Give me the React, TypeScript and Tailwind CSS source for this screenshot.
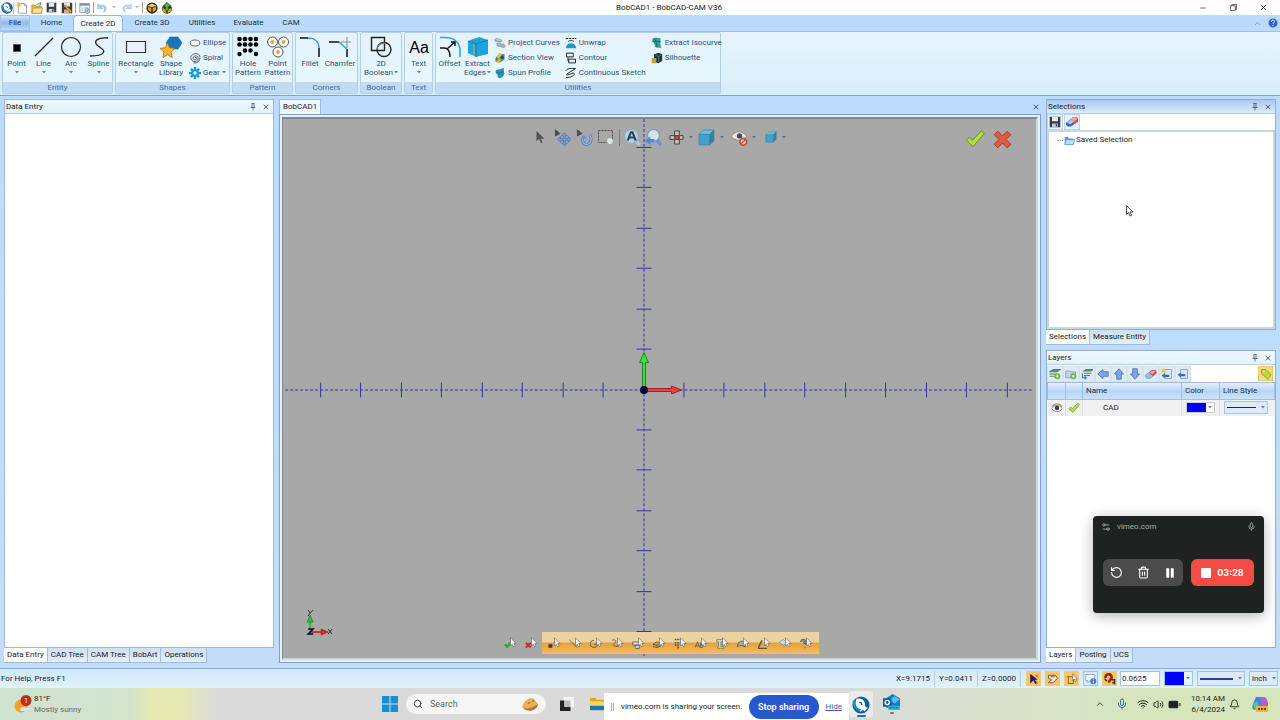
import type { ReactNode } from "react";
import clsx from "clsx";
import {
  Battery,
  Bell,
  ChevronUp,
  Mic,
  Minus,
  Pause,
  RotateCcw,
  Search,
  Settings2,
  Trash2,
  Volume2,
  Wifi,
  X,
} from "lucide-react";

interface IconProps {
  size?: number;
  box?: number;
  children: ReactNode;
}

function Icon({ size = 12, box = 16, children }: IconProps) {
  return (
    <svg
      width={size}
      height={size}
      viewBox={`0 0 ${box} ${box}`}
      fill="none"
      className="shrink-0"
      aria-hidden="true"
    >
      {children}
    </svg>
  );
}

function Caret({ className = "text-[#6b83a3]" }: { className?: string }) {
  return (
    <svg width="4" height="3" viewBox="0 0 4 3" className={clsx("shrink-0", className)} aria-hidden="true">
      <path d="M0 0h4L2 2.5z" fill="currentColor" />
    </svg>
  );
}

function Pin() {
  return (
    <Icon size={8}>
      <path d="M5 1h6M6 1v8M10 1v8M3 9h10M8 9v6" stroke="#23364f" strokeWidth="1.3" />
    </Icon>
  );
}

function BobLogo({ size = 12 }: { size?: number }) {
  return (
    <Icon size={size} box={20}>
      <circle cx="10" cy="10" r="9.5" fill="#11609c" />
      <path d="M5 3c4-1 8 0 9 4 1 3-1 5 3 6-2 3-6 4-9 2C4 13 3 8 5 3z" fill="#fff" />
      <path d="M2 5c0 7 4 11 10 11" stroke="#1b91c9" strokeWidth="2.5" />
      <path d="M8 7c2 0 3 1 3 3" stroke="#11609c" strokeWidth="1.5" />
      <path d="M9 17l4-4 1 3 3-3" stroke="#fff" strokeWidth="1.3" />
    </Icon>
  );
}

function SaveIcon({ size = 12 }: { size?: number }) {
  return (
    <Icon size={size}>
      <path d="M1 1h14v14H1z" fill="#343a40" />
      <path d="M4 1h8v6H4z" fill="#e9edf0" />
      <path d="M4 10h8v5H4z" fill="#c3c9ce" />
      <path d="M9 11h2v3H9z" fill="#343a40" />
    </Icon>
  );
}

function EraserIcon({ size = 12 }: { size?: number }) {
  return (
    <Icon size={size}>
      <path d="M0 9l9-7h5l2 2v3l-9 7H2l-2-2z" fill="#3f67c8" />
      <path d="M6 5l4-3h4l2 2v3l-5 4z" fill="#e04a40" />
      <path d="M1 9l5-4 5 2-5 4z" fill="#a9c3f3" />
      <path d="M6 5l4-3h3l2 2-4 3z" fill="#f4a49c" />
    </Icon>
  );
}

function CheckIcon({ size = 12 }: { size?: number }) {
  return (
    <Icon size={size}>
      <path d="M1 9l2.5-2.5L6 9l7-7.5 2.5 2L6.5 14z" fill="#b4dd3e" stroke="#6d8f22" strokeWidth=".8" />
    </Icon>
  );
}

function CrossIcon({ size = 12 }: { size?: number }) {
  return (
    <Icon size={size}>
      <path d="M1 4l3-3 4 4 4-4 3 3-4 4 4 4-3 3-4-4-4 4-3-3 4-4z" fill="#e1583f" stroke="#a5382b" strokeWidth=".8" />
    </Icon>
  );
}

function CubeIcon({ size = 12 }: { size?: number }) {
  return (
    <Icon size={size}>
      <path d="M1 5l4-4h10l-4 4z" fill="#61c4e6" />
      <path d="M1 5h10v10H1z" fill="#2da4d3" />
      <path d="M11 5l4-4v10l-4 4z" fill="#2380aa" />
      <path d="M1 5l4-4h10v10l-4 4H1zM1 5h10v10M11 5l4-4" stroke="#34728e" strokeWidth=".6" />
    </Icon>
  );
}

/* ---------- title bar ---------- */

const quickAccess: { name: string; icon: ReactNode; split?: boolean; sep?: boolean }[] = [
  {
    name: "New",
    icon: (
      <Icon>
        <path d="M3 2h8l3 3v10H3z" fill="#fff" stroke="#7d8b9c" />
        <path d="M11 2v3h3" stroke="#7d8b9c" />
        <path d="M4 0v8M0 4h8M1 1l6 6M7 1L1 7" stroke="#e9bf3a" strokeWidth="1.2" />
      </Icon>
    ),
  },
  {
    name: "Open",
    icon: (
      <Icon>
        <path d="M1 4h5l1 2h7v9H1z" fill="#e0b84c" stroke="#a78229" strokeWidth=".8" />
        <path d="M3 8h13l-3 7H1z" fill="#f9e29a" stroke="#a78229" strokeWidth=".8" />
        <path d="M8 4c1-3 4-3 5-1M13 0v4h-3" stroke="#4d9b48" strokeWidth="1.3" />
      </Icon>
    ),
  },
  { name: "Save", icon: <SaveIcon size={11} /> },
  {
    name: "Save As",
    sep: true,
    icon: (
      <Icon>
        <path d="M1 1h14v14H1z" fill="#453c36" />
        <path d="M4 1h8v5H4z" fill="#dfe3e6" />
        <path d="M4 10h7v5H4z" fill="#bcb4a4" />
        <path d="M4 5l2-1 8 8v3l-2-1z" fill="#f0a93a" stroke="#8b5616" strokeWidth=".7" />
      </Icon>
    ),
  },
  {
    name: "Properties",
    sep: true,
    icon: (
      <Icon>
        <path d="M1 2h13v12H1z" fill="#f4f7fa" stroke="#8693a3" />
        <path d="M1 2h13v3H1z" fill="#8693a3" />
        <path d="M3 8h2M7 8h5M3 11h2" stroke="#7389a3" />
        <circle cx="11" cy="12" r="3" fill="#cdd8e6" stroke="#69809d" />
        <circle cx="11" cy="12" r="1" fill="#69809d" />
      </Icon>
    ),
  },
  {
    name: "Undo",
    split: true,
    icon: (
      <Icon>
        <path d="M1 2v7h7L5.500 6.500c3-2 6 1 3.500 7.500 6-5 3-12-6-9.500z" fill="#b2cde9" stroke="#86a9cd" strokeWidth=".7" />
      </Icon>
    ),
  },
  {
    name: "Redo",
    split: true,
    sep: true,
    icon: (
      <Icon>
        <path d="M15 2v7H8l2.500-2.500c-3-2-6 1-3.500 7.500-6-5-3-12 6-9.500z" fill="#c5d7ea" stroke="#9cb6d0" strokeWidth=".7" />
      </Icon>
    ),
  },
  {
    name: "Stock",
    icon: (
      <Icon>
        <circle cx="8" cy="8" r="7.5" fill="#2f2a1d" />
        <path d="M2 5l6-3 6 3-6 2z" fill="#f2cf52" />
        <path d="M2 6l5 2v6l-4-3zM14 6L9 8v6l4-3z" fill="#d9a32a" />
      </Icon>
    ),
  },
  {
    name: "Post",
    icon: (
      <Icon>
        <circle cx="8" cy="9" r="6.5" fill="#2f2a1d" />
        <path d="M2 8l5 2v5l-4-2zM14 8l-5 2v5l4-2z" fill="#d9a32a" />
        <path d="M8 0l5 6h-3v5H6V6H3z" fill="#4cae3d" stroke="#20631b" strokeWidth=".7" />
      </Icon>
    ),
  },
];

function TitleBar() {
  return (
    <header className="relative flex h-[15px] shrink-0 items-center justify-between bg-white">
      <div className="flex items-center pl-px">
        <BobLogo size={12} />
        <span className="h-3 w-px bg-[#c9ced4]" />
        {quickAccess.map((item) => (
          <div key={item.name} className="flex items-center">
            <button aria-label={item.name} className="flex w-[15px] justify-center">
              {item.icon}
            </button>
            {item.split && (
              <span className="flex w-2 justify-center">
                <Caret className="text-[#b3bdc9]" />
              </span>
            )}
            {item.sep && <span className="mx-px h-[11px] w-px bg-[#9aa3ad]" />}
          </div>
        ))}
      </div>
      <h1 className="absolute left-1/2 ml-[29px] -translate-x-1/2 whitespace-nowrap">BobCAD1 - BobCAD-CAM V36</h1>
      <div className="flex items-center pr-[2px] text-[#222]">
        <button aria-label="Minimize" className="flex w-[30px] justify-center">
          <Minus size={8} />
        </button>
        <button aria-label="Restore" className="flex w-[30px] justify-center">
          <Icon size={7}>
            <path d="M1 4h11v11H1zM4 4V1h11v11h-3" stroke="#222" strokeWidth="1.6" />
          </Icon>
        </button>
        <button aria-label="Close" className="flex w-[30px] justify-center">
          <X size={9} />
        </button>
      </div>
    </header>
  );
}

/* ---------- ribbon ---------- */

const ribbonTabs = [
  { name: "Home", width: "w-[43px]" },
  { name: "Create 2D", width: "w-[50px]" },
  { name: "Create 3D", width: "w-[58px]" },
  { name: "Utilities", width: "w-[42px]" },
  { name: "Evaluate", width: "w-[51px]" },
  { name: "CAM", width: "w-[34px]" },
];

function RibbonTabs() {
  return (
    <nav className="flex h-4 shrink-0 items-stretch bg-[#badbfc] text-[#1c2b40]">
      <button className="w-[30px] border border-[#a3c3ea] bg-linear-to-b from-[#cfe3fa] via-[#8fb9ee] to-[#bcdafb] text-[#16365f]">
        File
      </button>
      {ribbonTabs.map((tab) => (
        <button
          key={tab.name}
          className={clsx(
            "whitespace-nowrap",
            tab.width,
            tab.name === "Create 2D" && "rounded-t-sm border-x border-t border-[#93b6de] bg-[#f2fafe]",
          )}
        >
          {tab.name}
        </button>
      ))}
      <div className="ml-auto flex items-center gap-[6px] pr-[2px]">
        <button aria-label="Collapse ribbon">
          <ChevronUp size={9} color="#6f8199" />
        </button>
        <button aria-label="Help">
          <Icon size={10}>
            <circle cx="8" cy="8" r="7.5" fill="#2b62c4" stroke="#a9c2ee" />
            <path d="M5.500 6c0-4 5.500-3 5 0-.3 1.500-2.500 1.500-2.500 3.500M8 11v2" stroke="#fff" strokeWidth="1.6" />
          </Icon>
        </button>
      </div>
    </nav>
  );
}

interface BigButtonProps {
  lines: string[];
  width: string;
  menu?: boolean;
  icon: ReactNode;
}

function BigButton({ lines, width, menu, icon }: BigButtonProps) {
  return (
    <button className={clsx("flex shrink-0 flex-col items-center pt-[3px]", width)}>
      <Icon size={22} box={22}>
        {icon}
      </Icon>
      <span className="mt-px whitespace-nowrap leading-[9px]">{lines[0]}</span>
      {lines[1] && (
        <span className="flex items-center gap-px whitespace-nowrap leading-[9px]">
          {lines[1]}
          {menu && <Caret />}
        </span>
      )}
      {menu && !lines[1] && (
        <span className="flex h-[8px] items-center">
          <Caret />
        </span>
      )}
    </button>
  );
}

function SmallButton({ label, menu, icon }: { label: string; menu?: boolean; icon: ReactNode }) {
  return (
    <button className="flex h-[15px] items-center gap-[2px] whitespace-nowrap">
      <Icon size={12}>{icon}</Icon>
      {label}
      {menu && <Caret />}
    </button>
  );
}

function Group({ title, className, children }: { title: string; className?: string; children: ReactNode }) {
  return (
    <section
      className={clsx(
        "flex shrink-0 flex-col rounded-xs border border-[#b3cfe8] bg-linear-to-b from-[#e3f2fb] to-[#e8f9ff] text-[#2f4f80]",
        className,
      )}
    >
      <div className="flex flex-1">{children}</div>
      <h2 className="h-[11px] bg-[#c2dbf4] text-center leading-[11px] text-[#4468ab]">{title}</h2>
    </section>
  );
}

function Ribbon() {
  return (
    <div className="flex h-[65px] shrink-0 gap-[2px] border-y border-[#9bbfe6] border-b-[#7ba4d6] bg-linear-to-b from-[#e8f4fc] to-[#d5eefa] px-[2px] pb-px">
      <Group title="Entity" className="w-[111px]">
        <BigButton lines={["Point"]} width="w-[27px]" menu icon={<path d="M7.500 8.500h7v7h-7z" fill="#000" stroke="#555" />} />
        <BigButton
          lines={["Line"]}
          width="w-[27px]"
          menu
          icon={<path d="M2 20L20 2" stroke="#222" strokeWidth="1.2" />}
        />
        <BigButton
          lines={["Arc"]}
          width="w-[28px]"
          menu
          icon={<circle cx="11" cy="11" r="9.5" stroke="#222" strokeWidth="1.2" />}
        />
        <BigButton
          lines={["Spline"]}
          width="w-[27px]"
          menu
          icon={<path d="M20 2C10 1 5 5 9 9c3 3 9 5 6 8-2 3-8 3-13 3" stroke="#222" strokeWidth="1.3" />}
        />
      </Group>

      <Group title="Shapes" className="w-[115px]">
        <BigButton
          lines={["Rectangle"]}
          width="w-[40px]"
          menu
          icon={<path d="M1.500 5.500h19v11h-19z" fill="#eaf3fa" stroke="#333" strokeWidth="1.2" />}
        />
        <BigButton
          lines={["Shape", "Library"]}
          width="w-[30px]"
          icon={
            <>
              <path d="M10 1h8l4 6-4 6h-8L6 7z" fill="#1a74c0" stroke="#155a98" strokeWidth=".6" />
              <path
                d="M7.500 7l2.200 4.800 5.300.6-4 3.600 1.200 5.500-4.700-2.800L3 21.500 4 16 0 12.400l5.300-.6z"
                fill="#fdb62e"
                stroke="#b36a0a"
                strokeWidth=".8"
              />
            </>
          }
        />
        <div className="flex flex-col pl-[3px] pt-[2px]">
          <SmallButton
            label="Ellipse"
            icon={<ellipse cx="8" cy="8" rx="6.5" ry="4" fill="#fff" stroke="#444" strokeWidth="1.1" />}
          />
          <SmallButton
            label="Spiral"
            icon={
              <path
                d="M8 8c1-2 3 0 2 1.500S6 11 5.500 8.500 8 4.500 10.500 5.500 13 11 9.500 12.500 2.500 11 2.500 7.500 7 1.500 10.500 2s5 5 3.500 8.500-5 4.500-8 4"
                stroke="#444"
                strokeWidth="1.1"
              />
            }
          />
          <SmallButton
            label="Gear"
            menu
            icon={
              <>
                <circle cx="8" cy="8" r="5" fill="#1b9ad6" />
                <path d="M8 0v16M0 8h16M2.500 2.500l11 11M13.500 2.500l-11 11" stroke="#1b9ad6" strokeWidth="3" />
                <circle cx="8" cy="8" r="2.3" fill="#e3f4fc" />
              </>
            }
          />
        </div>
      </Group>

      <Group title="Pattern" className="w-[61px]">
        <BigButton
          lines={["Hole", "Pattern"]}
          width="w-[30px]"
          icon={
            <g fill="#000">
              {[2.5, 8, 13.5, 19].map((x) => (
                <g key={x}>
                  <circle cx={x} cy="3" r="2.3" />
                  <circle cx={x} cy="8.5" r="2.3" />
                </g>
              ))}
              <circle cx="8" cy="14.5" r="2.2" />
              <circle cx="13.5" cy="14.5" r="2.2" />
              <circle cx="2.5" cy="18" r="2.2" />
              <circle cx="19" cy="18" r="2.2" />
            </g>
          }
        />
        <BigButton
          lines={["Point", "Pattern"]}
          width="w-[29px]"
          icon={
            <>
              {[
                [5.5, 6],
                [16.5, 6],
                [11, 16],
              ].map(([x, y]) => (
                <g key={`${x}-${y}`}>
                  <circle cx={x} cy={y} r="5" fill="#fff" stroke="#555" />
                  <circle cx={x} cy={y} r="2" fill="#eba43b" />
                </g>
              ))}
            </>
          }
        />
      </Group>

      <Group title="Corners" className="w-[63px]">
        <BigButton
          lines={["Fillet"]}
          width="w-[28px]"
          icon={
            <>
              <path d="M1 2h8M20 12v9" stroke="#111" strokeWidth="1.5" />
              <path d="M9 2c7 0 11 4 11 10" stroke="#27a5dc" strokeWidth="1.5" />
            </>
          }
        />
        <BigButton
          lines={["Chamfer"]}
          width="w-[32px]"
          icon={
            <>
              <path d="M0 6h10M18 13v8" stroke="#111" strokeWidth="1.5" />
              <path d="M10 6l8 7" stroke="#27a5dc" strokeWidth="1.5" />
              <path d="M12 6h10M18 1v11" stroke="#777" strokeWidth=".8" />
            </>
          }
        />
      </Group>

      <Group title="Boolean" className="w-[42px]">
        <BigButton
          lines={["2D", "Boolean"]}
          width="w-[40px]"
          menu
          icon={
            <g stroke="#222" strokeWidth="1.4">
              <path d="M1.500 1.500h13v13h-13z" />
              <circle cx="14" cy="13.5" r="7" />
              <path d="M7 14c0-4 3-7 8-7" stroke="#777" />
            </g>
          }
        />
      </Group>

      <Group title="Text" className="w-[29px]">
        <BigButton
          lines={["Text"]}
          width="w-[27px]"
          menu
          icon={
            <text x="11" y="17" textAnchor="middle" fontSize="16" fontFamily="Liberation Sans, sans-serif" fill="#000">
              Aa
            </text>
          }
        />
      </Group>

      <Group title="Utilities" className="w-[286px]">
        <BigButton
          lines={["Offset"]}
          width="w-[27px]"
          icon={
            <>
              <path d="M1 1.500h5c9 0 15 5 15 13V21" stroke="#27a5dc" strokeWidth="1.5" />
              <path d="M1 12h4c4 0 6 3 6 9M8 13l8-7M12 6h4v4" stroke="#111" strokeWidth="1.4" />
            </>
          }
        />
        <BigButton
          lines={["Extract", "Edges"]}
          width="w-[29px]"
          menu
          icon={
            <>
              <path d="M1 5l11-4 9 3v14l-12 3-8-4z" fill="#1ba4de" />
              <path d="M1 5l8 3 12-4M9 8v13" stroke="#116f9e" strokeWidth=".8" />
              <path d="M7 8v12" stroke="#e5b53c" />
            </>
          }
        />
        <div className="flex flex-col pl-[2px] pt-[2px]">
          <SmallButton
            label="Project Curves"
            icon={
              <>
                <path d="M1 3c3-3 6 1 8 0l2 3c-3 2-6-2-9 0z" fill="#b9cbd4" stroke="#7b939f" strokeWidth=".8" />
                <path d="M3 9c4-3 6 2 10 0l2 4c-4 3-6-2-9 0z" fill="#9fb9c2" stroke="#6e8794" strokeWidth=".8" />
                <path d="M1 5c3 0 4 2 8 1" stroke="#57a38f" strokeWidth="1.3" />
              </>
            }
          />
          <SmallButton
            label="Section View"
            icon={
              <>
                <path d="M2 8l5-6 7 1v7l-6 4-6-1z" fill="#1d8bb8" />
                <path d="M3 6l5-5 3 2-5 6z" fill="#f1c231" />
                <path d="M2 13l5-5 3 2-3 5z" fill="#e8a923" />
                <circle cx="11" cy="7" r="2" fill="#244b58" />
              </>
            }
          />
          <SmallButton
            label="Spun Profile"
            icon={
              <>
                <path d="M2 6c0-2 3-3 6-3l5-2v5c2 4-1 8-5 9-3 0-4-3-3-5-2 0-3-2-3-4z" fill="#2892bb" />
                <path d="M4 7c3 2 6 1 9-2" stroke="#146280" />
              </>
            }
          />
        </div>
        <div className="flex flex-col pl-[5px] pt-[2px]">
          <SmallButton
            label="Unwrap"
            icon={
              <>
                <path d="M1 15c1-9 13-9 14 0z" fill="#1d9acb" />
                <path d="M1 2h14" stroke="#222" strokeWidth="1.5" strokeDasharray="3 1" />
                <path d="M4 6c2-2 6-2 8 0" stroke="#222" />
              </>
            }
          />
          <SmallButton
            label="Contour"
            icon={<path d="M2 1.500h9v5H2zM5 9.500h9v5H5zM4 7v5M4 12h1" stroke="#222" strokeWidth="1.3" />}
          />
          <SmallButton
            label="Continuous Sketch"
            icon={<path d="M1 5c3-4 8-3 13-3L3 9c-4 4 5 0 8-1 4 1 0 5-7 6H1" stroke="#222" strokeWidth="1.3" />}
          />
        </div>
        <div className="flex flex-col pl-[5px] pt-[2px]">
          <SmallButton
            label="Extract Isocurve"
            icon={
              <>
                <path d="M2 2c4-2 7 0 10-1 2 4-1 7 2 13-4 1-7-1-9 0 2-5-4-6-3-12z" fill="#2c9ea7" />
                <path d="M5 2c1 4 3 7 3 12M1 6c4-1 8 1 12 0" stroke="#1e5f3c" />
              </>
            }
          />
          <SmallButton
            label="Silhouette"
            icon={
              <>
                <path d="M4 3l6-2 5 2v9l-5 3-6-2z" fill="#1c3f3c" />
                <path d="M1 8h6v7H1z" fill="#c59b36" />
                <path d="M6 4l4 2 4-2M10 6v7" stroke="#3d8e8a" />
              </>
            }
          />
        </div>
      </Group>
    </div>
  );
}

/* ---------- docked panels ---------- */

function PanelHeader({ title, active }: { title: string; active?: boolean }) {
  return (
    <div
      className={clsx(
        "flex h-[14px] shrink-0 items-center border-b border-[#b5cfea] px-px",
        active ? "bg-linear-to-b from-[#a9c8ef] to-[#dcebfa]" : "bg-linear-to-b from-[#eef7fd] to-[#e3f3fb]",
      )}
    >
      <h2>{title}</h2>
      <div className="ml-auto flex items-center gap-[5px] pr-[2px]">
        <button aria-label={`Pin ${title}`}>
          <Pin />
        </button>
        <button aria-label={`Close ${title}`}>
          <X size={8} />
        </button>
      </div>
    </div>
  );
}

function PanelTabs({ tabs }: { tabs: string[] }) {
  return (
    <div className="flex h-[15px] shrink-0" role="tablist">
      {tabs.map((tab, index) => (
        <button
          key={tab}
          role="tab"
          aria-selected={index === 0}
          className={clsx(
            "whitespace-nowrap border-r border-b border-[#9dbbe0] px-[3px]",
            index === 0 ? "bg-white" : "bg-linear-to-b from-[#cde0f4] to-[#e2effb]",
          )}
        >
          {tab}
        </button>
      ))}
    </div>
  );
}

function DataEntryPanel() {
  return (
    <aside className="flex w-[270px] shrink-0 flex-col">
      <div className="flex flex-1 flex-col border border-[#9dbbe0] bg-white">
        <PanelHeader title="Data Entry" />
      </div>
      <PanelTabs tabs={["Data Entry", "CAD Tree", "CAM Tree", "BobArt", "Operations"]} />
    </aside>
  );
}

const layerTools: { name: string; icon: ReactNode }[] = [
  {
    name: "Add layer",
    icon: (
      <>
        <path d="M1 5l5-3h9l-5 3zM1 8h9M1 11h7" fill="#4d83bb" stroke="#55845a" strokeWidth="1.5" />
        <circle cx="11" cy="11" r="4" fill="#6cb637" />
        <path d="M11 9v4M9 11h4" stroke="#fff" strokeWidth="1.3" />
      </>
    ),
  },
  {
    name: "Add folder",
    icon: (
      <>
        <path d="M1 4h5l1 1h7v8H1z" fill="#c4d6e8" stroke="#7d9ab8" />
        <circle cx="11" cy="11" r="4" fill="#6cb637" />
        <path d="M11 9v4M9 11h4" stroke="#fff" strokeWidth="1.3" />
      </>
    ),
  },
  {
    name: "Move to layer",
    icon: (
      <>
        <path d="M4 4l3-2h9l-3 2zM4 7h10M4 10h8" fill="#4d83bb" stroke="#55845a" strokeWidth="1.5" />
        <path d="M2 7v6h5M5 11l2 2-2 2" stroke="#3d72bd" strokeWidth="1.5" />
      </>
    ),
  },
  { name: "Move left", icon: <path d="M1 8l7-6v3h7v6H8v3z" fill="#7fa5e6" stroke="#4268a8" /> },
  { name: "Move up", icon: <path d="M8 1l6 7h-3v7H5V8H2z" fill="#7fa5e6" stroke="#4268a8" /> },
  { name: "Move down", icon: <path d="M8 15l6-7h-3V1H5v7H2z" fill="#7fa5e6" stroke="#4268a8" /> },
  {
    name: "Delete",
    icon: (
      <>
        <path d="M0 10l9-7h5l1 2v2l-8 7H2z" fill="#9db6e8" stroke="#6a7fb0" strokeWidth=".6" />
        <path d="M5 6l4-3h5l1 2v2l-4 4z" fill="#e04a40" />
        <path d="M6 6l3-2h4l1 1-4 3z" fill="#f4a49c" />
      </>
    ),
  },
  {
    name: "Import new",
    icon: (
      <>
        <path d="M5 2h9v12H5z" fill="#dbe6f2" stroke="#7b91ad" />
        <path d="M1 1h5v5H1z" fill="#f4c640" />
        <path d="M1 10l4-3v2h6v3H5v2z" fill="#356bc0" />
      </>
    ),
  },
  {
    name: "Import",
    icon: (
      <>
        <path d="M5 2h9v12H5z" fill="#dbe6f2" stroke="#7b91ad" />
        <path d="M1 9l4-3v2h6v3H5v2z" fill="#356bc0" />
      </>
    ),
  },
];

function RightPanels() {
  return (
    <aside className="flex w-[230px] shrink-0 flex-col gap-[5px]">
      <div className="flex flex-[246] basis-0 flex-col">
        <div className="flex flex-1 flex-col border border-[#8fb0d8] bg-white">
          <PanelHeader title="Selections" active />
          <div className="flex h-4 shrink-0 items-center">
            <button aria-label="Save selection" className="border border-[#b9d6ea] bg-[#e4f1f8] p-px">
              <SaveIcon size={12} />
            </button>
            <button aria-label="Clear selection" className="ml-px border border-[#b9d6ea] bg-[#e4f1f8] p-px">
              <EraserIcon size={12} />
            </button>
          </div>
          <div className="relative flex-1 border-2 border-[#ccd5da] pl-2 pt-[2px]">
            <ul>
              <li className="flex items-center gap-px">
                <span className="w-[6px] border-t border-dotted border-[#aaa]" />
                <Icon size={11}>
                  <path d="M1 3h5l1 2h7v9H1z" fill="#5c9bd8" />
                  <path d="M3 7h13l-3 7H1z" fill="#bfe0fa" stroke="#3f7fba" strokeWidth=".8" />
                </Icon>
                Saved Selection
              </li>
            </ul>
            <svg width="8" height="12" viewBox="0 0 8 12" className="absolute left-[77px] top-[73px]" aria-hidden="true">
              <path d="M.5.5v9l2-2L4 11l1.500-.7L4 7h3z" fill="#fff" stroke="#222" strokeWidth=".8" />
            </svg>
          </div>
        </div>
        <PanelTabs tabs={["Selections", "Measure Entity"]} />
      </div>

      <div className="flex flex-[313] basis-0 flex-col">
        <div className="flex flex-1 flex-col border border-[#8fb0d8] bg-white">
          <PanelHeader title="Layers" />
          <div className="flex h-[17px] shrink-0 items-center">
            {layerTools.map((tool) => (
              <button
                key={tool.name}
                aria-label={tool.name}
                className="flex size-4 items-center justify-center border border-[#d3e3ec] bg-[#dcebf4]"
              >
                <Icon size={12}>{tool.icon}</Icon>
              </button>
            ))}
            <button
              aria-label="Tag"
              className="ml-auto mr-[2px] flex size-[15px] items-center justify-center border border-[#eec65e] bg-[#fbd98a]"
            >
              <Icon size={12}>
                <path d="M2 2h6l7 7-5 6-8-8z" fill="#b9d93b" stroke="#73942a" />
                <circle cx="5" cy="5" r="1" fill="#fff" />
              </Icon>
            </button>
          </div>
          <table className="w-full table-fixed border-collapse text-left">
            <thead>
              <tr className="h-[17px] bg-linear-to-b from-[#e3effb] via-[#b7d5f5] to-[#cfe4fa] text-[#1c2b40]">
                <th aria-label="Visible" className="w-[18px] border border-[#9fc0e4]" />
                <th aria-label="Active" className="w-[17px] border border-[#9fc0e4]" />
                <th className="border border-[#9fc0e4] pl-[3px] font-normal">Name</th>
                <th className="w-[38px] border border-[#9fc0e4] pl-[3px] font-normal">Color</th>
                <th className="w-[55px] border border-[#9fc0e4] pl-[3px] font-normal">Line Style</th>
              </tr>
            </thead>
            <tbody>
              <tr className="h-4 bg-[#f0f0f0]">
                <td className="border-r border-[#dcdcdc] pl-[3px]">
                  <Icon size={12}>
                    <path d="M1 9c3-6 11-6 14 0-4 5-10 5-14 0z" fill="#fff" stroke="#7c5a48" />
                    <circle cx="8" cy="8" r="3" fill="#354152" />
                    <path d="M1 6c4-5 10-5 14 0" stroke="#a9806a" strokeWidth="1.5" />
                  </Icon>
                </td>
                <td className="border-r border-[#dcdcdc] pl-[2px]">
                  <CheckIcon size={12} />
                </td>
                <td className="border-r border-[#dcdcdc] pl-5">CAD</td>
                <td className="border-r border-[#dcdcdc] pl-1">
                  <button
                    aria-label="Layer color"
                    className="flex h-[11px] w-[29px] items-center justify-between border border-[#c2cfdd] bg-white pr-[2px]"
                  >
                    <span className="h-[9px] w-[19px] bg-[#0000fa]" />
                    <Caret />
                  </button>
                </td>
                <td className="pl-1">
                  <button
                    aria-label="Layer line style"
                    className="flex h-[13px] w-[44px] items-center justify-between border border-[#a9c6e6] bg-[#dceafa] px-[2px]"
                  >
                    <span className="h-px w-[29px] bg-[#0a1e9e]" />
                    <Caret />
                  </button>
                </td>
              </tr>
            </tbody>
          </table>
        </div>
        <PanelTabs tabs={["Layers", "Posting", "UCS"]} />
      </div>
    </aside>
  );
}

/* ---------- drawing area ---------- */

const TICK = 40.45;
const ORIGIN = { x: 362, y: 271 };

function Axes() {
  const across = Array.from({ length: 18 }, (_, i) => i - 8).filter((n) => n !== 0);
  const down = Array.from({ length: 13 }, (_, i) => i - 6).filter((n) => n !== 0);

  return (
    <svg
      className="absolute inset-0 size-full"
      viewBox="0 0 756 540"
      preserveAspectRatio="xMidYMid slice"
      fill="none"
      aria-hidden="true"
    >
      <g stroke="#3434a4">
        <path d={`M3 ${ORIGIN.y + 0.5}H753M${ORIGIN.x + 0.5} 0V540`} strokeDasharray="3 2" />
        {across.map((n) => (
          <path key={n} d={`M${Math.floor(ORIGIN.x + n * TICK) + 0.5} ${ORIGIN.y - 7}v15`} />
        ))}
        {down.map((n) => (
          <path key={n} d={`M${ORIGIN.x - 7} ${Math.floor(ORIGIN.y + n * TICK) + 0.5}h15`} />
        ))}
      </g>
      <path d="M361 272v-28h-3l4.500-10 4.500 10h-3v28z" fill="#3ee03e" stroke="#167a16" strokeWidth=".9" />
      <path d="M362 270h28v-2.500l10 4-10 4V273h-28z" fill="#e8463c" stroke="#941c16" strokeWidth=".9" />
      <circle cx="362.5" cy="271.5" r="4" fill="#06063c" />

      <path d="M28 513v-12" stroke="#2fbf2f" strokeWidth="2" />
      <path d="M25 504l3-7 3 7z" fill="#2fbf2f" stroke="#167a16" strokeWidth=".6" />
      <path d="M26 492l2 3 3-3M28 495l-2 3" stroke="#222" strokeWidth=".9" />
      <path d="M29 514h12" stroke="#d92c22" strokeWidth="2" />
      <path d="M39 511l7 3-7 3z" fill="#d92c22" stroke="#941c16" strokeWidth=".6" />
      <path d="M46 511l4 5M50 511l-4 5" stroke="#222" strokeWidth=".9" />
      <path d="M26 511h5l-5 5h5" stroke="#06063c" strokeWidth="1.5" />
    </svg>
  );
}

function ViewToolbar() {
  return (
    <div className="relative mx-auto flex h-5 items-center pr-1 opacity-90">
      <button aria-label="Select" className="flex w-[22px] justify-center">
        <Icon size={14}>
          <path d="M4 1v12l3-3 2 5 2-1-2-4h4z" fill="#4a4a4a" />
        </Icon>
      </button>
      <button aria-label="Pan" className="flex w-[22px] justify-center">
        <Icon size={17} box={18}>
          <path d="M1 0v8l6-3z" fill="#444" />
          <path
            d="M11 4l3 3h-2v3h3V8l3 3-3 3v-2h-3v3h2l-3 3-3-3h2v-3H7v2l-3-3 3-3v2h3V7H8z"
            fill="#6aa0e4"
            stroke="#2e5ca4"
            strokeWidth=".6"
          />
        </Icon>
      </button>
      <button aria-label="Rotate" className="flex w-[22px] justify-center">
        <Icon size={17} box={18}>
          <path d="M1 0v8l6-3z" fill="#444" />
          <path d="M7 10c-1 9 10 8 9 0 0-2-1-3-2-4" stroke="#4578c4" strokeWidth="3" />
          <path d="M7 10c-1 9 10 8 9 0 0-2-1-3-2-4" stroke="#8fbaf0" strokeWidth="1.5" />
          <path d="M5 11l2-5 5 3z" fill="#5f93dd" />
        </Icon>
      </button>
      <button aria-label="Window select" className="flex w-[22px] justify-center">
        <Icon size={16}>
          <path d="M.5 1.500h14v12H.5z" stroke="#444" strokeDasharray="2 1" />
          <circle cx="12" cy="12" r="3" fill="#dceaf0" />
        </Icon>
      </button>
      <span className="mx-[2px] h-[17px] w-px bg-[#777]" />
      <button aria-label="Zoom all" className="flex w-[21px] justify-center">
        <Icon size={17}>
          <path d="M10 10l5 5" stroke="#a9cbe4" strokeWidth="3" />
          <circle cx="7" cy="7" r="6.5" fill="#bcd9e6" stroke="#91b1bf" />
          <path d="M3.500 11L6.500 3h1.500l3 8M5 8h5" stroke="#123e66" strokeWidth="2" />
        </Icon>
      </button>
      <button aria-label="Zoom previous" className="flex w-[21px] justify-center">
        <Icon size={17}>
          <path d="M11 10l4 5" stroke="#5c95d4" strokeWidth="3" />
          <circle cx="8" cy="6" r="5.5" fill="#d8ecf4" stroke="#7896a8" />
          <path d="M0 11l5-4v2.500h4v3H5V15z" fill="#4b84d8" />
        </Icon>
      </button>
      <button aria-label="View orientation" className="flex w-[29px] items-center justify-between pl-[5px]">
        <Icon size={15}>
          <path d="M6 1h5v5h4v4h-4v5H6v-5H1V6h5z" fill="#c3c3c3" stroke="#333" />
          <path d="M6 6h5v4H6z" fill="#d43a32" stroke="#333" />
        </Icon>
        <Caret className="text-[#4b6a8a]" />
      </button>
      <button aria-label="Shading" className="flex w-[31px] items-center justify-between pl-[5px]">
        <CubeIcon size={17} />
        <Caret className="text-[#4b6a8a]" />
      </button>
      <button aria-label="Hide" className="flex w-[32px] items-center justify-between pl-[7px]">
        <Icon size={17}>
          <path d="M0 7c4-6 11-6 15 0-4 5-11 5-15 0z" fill="#eee" stroke="#b38b62" />
          <circle cx="8" cy="6.5" r="2.5" fill="#374556" />
          <circle cx="11.500" cy="12" r="3.2" fill="#f2c9c1" stroke="#ce3e2f" strokeWidth="1.5" />
          <path d="M9.500 14l4-4" stroke="#ce3e2f" strokeWidth="1.3" />
        </Icon>
        <Caret className="text-[#4b6a8a]" />
      </button>
      <button aria-label="Display" className="flex w-[30px] items-center justify-between pl-[9px]">
        <CubeIcon size={12} />
        <Caret className="text-[#4b6a8a]" />
      </button>
    </div>
  );
}

const snaps: { name: string; shape: ReactNode }[] = [
  { name: "Point", shape: <path d="M1 9h4v4H1z" fill="#333" /> },
  { name: "Line", shape: <path d="M0 3l10 10" /> },
  { name: "Arc", shape: <path d="M5 4a4.500 4.500 0 1 0 4 6M5 9h5" /> },
  { name: "Spline", shape: <path d="M1 4c6-2 6 2 3 4s1 5 6 3" /> },
  { name: "Chain", shape: <path d="M1 6h8v4H1zM4 10h5v4H4z" fill="#ddd" /> },
  { name: "Solid", shape: <path d="M0 9l4-3 6 1v4l-5 2-5-1zM0 9l5 1 5-3M5 10v3" fill="#c99f49" /> },
  { name: "Pattern", shape: <path d="M1 3h9M1 7h7M1 10h6M4 13h3" strokeWidth="2" strokeDasharray="2 1" /> },
  { name: "Text", shape: <path d="M0 13l3-7 3 7M1 11h4M7 7v6h2c2-2 1-3-2-3 3 0 2-3 0-3" /> },
  { name: "Edge", shape: <path d="M1 3h8v3H6v6h4v2H2v-2h1V6H1z" fill="#ccd8c4" stroke="#777" /> },
  { name: "Surface", shape: <path d="M0 12c2-8 6-8 10-5v5c-4-2-6-2-10 0z" fill="#9eb4a0" /> },
  { name: "Angle", shape: <path d="M0 14L5 4M0 14h11" strokeWidth="1.8" /> },
  { name: "Face", shape: <path d="M0 7l5-4 5 4-4 3zM6 11v3" fill="#c7dfdf" stroke="#7e8f8f" /> },
  { name: "Curve", shape: <path d="M0 6c3-6 7-2 10 0M4 7l3-2v4zM6 12v2" fill="#7e9a9a" /> },
];

function SnapCursor({ children }: { children: ReactNode }) {
  return (
    <Icon size={13}>
      <g stroke="#555">{children}</g>
      <path d="M8 1v10l2-2 2 3 1.500-1L12 8h3z" fill="#f4f4f4" stroke="#666" strokeWidth=".8" />
    </Icon>
  );
}

function SnapToolbar() {
  return (
    <div className="relative mx-auto mb-1 mt-auto flex h-[22px] items-center">
      <button aria-label="Accept selection" className="flex w-[21px] justify-center">
        <SnapCursor>
          <path d="M1 9l3 3 5-6" stroke="#37a52c" strokeWidth="3" />
        </SnapCursor>
      </button>
      <button aria-label="Clear picks" className="flex w-[21px] justify-center">
        <SnapCursor>
          <path d="M1 7l6 6M7 7l-6 6" stroke="#cb2c26" strokeWidth="2.5" />
        </SnapCursor>
      </button>
      <div className="flex h-[22px] items-center bg-linear-to-b from-[#ecd2a0] from-45% via-[#e8a03a] via-50% to-[#f0c060] px-[2px]">
        {snaps.map((snap) => (
          <button key={snap.name} aria-label={`Pick ${snap.name}`} className="flex w-[21px] justify-center">
            <SnapCursor>{snap.shape}</SnapCursor>
          </button>
        ))}
      </div>
    </div>
  );
}

function Viewport() {
  return (
    <main className="flex min-w-0 flex-1 flex-col">
      <div className="flex h-[15px] shrink-0 items-center justify-between">
        <button className="h-full border-x border-t border-[#9dbbe0] bg-[#eef8fe] px-[3px]">BobCAD1</button>
        <button aria-label="Close document" className="pr-px">
          <X size={8} />
        </button>
      </div>
      <div className="flex flex-1 border border-[#7f9fc9] bg-[#e3f3fb] p-[2px]">
        <div className="relative flex flex-1 flex-col overflow-hidden border-t-2 border-l border-r-2 border-b-2 border-[#7c8a90] border-r-[#cdd6d6] border-b-[#cdd6d6] bg-[#a8a8a8] pt-2">
          <Axes />
          <ViewToolbar />
          <div className="absolute right-6 top-[10px] flex gap-2">
            <button aria-label="OK">
              <CheckIcon size={20} />
            </button>
            <button aria-label="Cancel">
              <CrossIcon size={19} />
            </button>
          </div>
          <SnapToolbar />
        </div>
      </div>
    </main>
  );
}

/* ---------- status bar ---------- */

const statusTools: { name: string; on: boolean; icon: ReactNode }[] = [
  {
    name: "Snap",
    on: true,
    icon: (
      <>
        <path d="M3 1v13l4-4 3 5 2-2-3-4h4z" fill="#25166e" />
        <path d="M10 2l4 4M14 2l-4 4M12 11v4" stroke="#a9604a" />
      </>
    ),
  },
  {
    name: "Planar",
    on: true,
    icon: <path d="M2 3h9l3 4-6 6H2l4-4-4-2zM5 5h5" fill="#f4e4c4" stroke="#66513a" strokeWidth="1.2" />,
  },
  {
    name: "Ortho",
    on: true,
    icon: (
      <>
        <path d="M1 5h9v9M3 5v9h7" stroke="#8a6630" strokeWidth="1.3" />
        <path d="M9 1v9l2-2 2 4 1-1-1-3h2z" fill="#fff" stroke="#555" strokeWidth=".8" />
      </>
    ),
  },
  {
    name: "Info",
    on: false,
    icon: (
      <>
        <path d="M1 2h12v8H7l-3 3v-3H1z" fill="#f4f8fc" stroke="#7e98b8" />
        <circle cx="11" cy="11" r="4" fill="#3f78c8" />
        <path d="M11 8.500v1M11 10.500v3" stroke="#fff" strokeWidth="1.3" />
      </>
    ),
  },
  {
    name: "Magnet",
    on: true,
    icon: (
      <>
        <path d="M2 7C1 0 11 0 10 6c0 3-4 3-3 7" stroke="#a3221c" strokeWidth="3.5" />
        <path d="M10 9h4v6M11 13h4M1 8l3 3" stroke="#333" strokeWidth="2" />
      </>
    ),
  },
];

function StatusBar() {
  return (
    <footer className="flex h-5 shrink-0 items-center border-t border-[#85aee0] bg-linear-to-b from-[#cfe8fa] to-[#e0f3fa] pr-[2px]">
      <p className="flex-1 pl-px">For Help, Press F1</p>
      {["X=9.1715", "Y=0.0411", "Z=0.0000"].map((value) => (
        <span key={value} className="flex h-4 w-[43px] items-center justify-center border-r border-[#b7cedd]">
          {value}
        </span>
      ))}
      <div className="ml-[5px] flex gap-1">
        {statusTools.map((tool) => (
          <button
            key={tool.name}
            aria-label={tool.name}
            className={clsx(
              "flex size-[15px] items-center justify-center border",
              tool.on ? "border-[#edc979] bg-[#fbc566]" : "border-[#a5c3df] bg-[#dbeaf7]",
            )}
          >
            <Icon size={12}>{tool.icon}</Icon>
          </button>
        ))}
      </div>
      <input
        aria-label="Snap increment"
        defaultValue="0.0625"
        className="ml-[3px] h-[15px] w-10 border border-[#a5c3df] bg-white pl-px"
      />
      <button
        aria-label="Current color"
        className="ml-1 flex h-[15px] w-[29px] items-center justify-between border border-[#a5c3df] bg-[#e6f1fa] pr-[2px]"
      >
        <span className="h-[13px] w-[19px] bg-[#0000fa]" />
        <Caret />
      </button>
      <button
        aria-label="Current line style"
        className="ml-1 flex h-[15px] w-12 items-center justify-between border border-[#a5c3df] bg-[#dbe9f8] px-[2px]"
      >
        <span className="h-[2px] w-[33px] bg-[#2a3fa4]" />
        <Caret />
      </button>
      <div className="relative ml-1 flex items-center">
        <select
          aria-label="Units"
          className="h-[15px] w-[29px] appearance-none border border-[#a5c3df] bg-[#dbe9f8] pl-[2px]"
        >
          <option>inch</option>
          <option>mm</option>
        </select>
        <span className="pointer-events-none absolute right-[2px]">
          <Caret />
        </span>
      </div>
    </footer>
  );
}

/* ---------- desktop ---------- */

function Taskbar() {
  return (
    <div className="flex h-8 shrink-0 items-center overflow-hidden bg-[linear-gradient(90deg,#cfe3d2_0%,#d3e3cc_10%,#e6eab0_12%,#e6eab0_14%,#dadada_17%,#dadada_65%,#d5e6bd_90%)] text-[#222]">
      <div className="flex h-full flex-1 items-center pl-[14px]">
        <button className="flex items-center gap-[2px] text-left">
          <Icon size={18} box={18}>
            <circle cx="7" cy="11" r="6.5" fill="#f4a12c" />
            <path d="M6 15c1-4 5-4 6-2 4-1 5 3 1 3H7z" fill="#d6e3f4" />
            <circle cx="12" cy="5.500" r="5.5" fill="#b83222" />
            <text x="12" y="8" textAnchor="middle" fontSize="7" fill="#fff">
              1
            </text>
          </Icon>
          <span className="flex flex-col leading-[11px]">
            <span>81°F</span>
            <span className="text-[#666]">Mostly sunny</span>
          </span>
        </button>
      </div>

      <div className="flex h-full shrink-0 items-center">
        <button aria-label="Start">
          <Icon size={16}>
            <path d="M0 0h7.500v7.500H0zM8.500 0H16v7.500H8.500zM0 8.500h7.500V16H0zM8.500 8.500H16V16H8.500z" fill="#1491da" />
          </Icon>
        </button>
        <label className="ml-2 flex h-5 w-[140px] items-center rounded-full bg-[#f5f5f5] px-[7px]">
          <Search size={10} className="shrink-0" />
          <input
            aria-label="Search"
            placeholder="Search"
            className="ml-[7px] min-w-0 flex-1 bg-transparent text-[9px] placeholder:text-[#666]"
          />
          <Icon size={18} box={18}>
            <path d="M1 12c1-5 6-9 11-9l5 6c-1 5-7 7-12 6z" fill="#edaf55" />
            <path d="M1 12c4 3 11 1 16-3-1 6-7 8-12 6z" fill="#ba742c" />
            <circle cx="8" cy="8" r="1" fill="#b57129" />
            <circle cx="12" cy="6" r="1" fill="#b57129" />
          </Icon>
        </label>
        <button aria-label="Task view" className="ml-[14px]">
          <Icon size={14}>
            <path d="M4 0h12v12H4z" fill="#f4f4f4" />
            <path d="M0 4h5v7h7v5H0z" fill="#222" />
            <path d="M5 4h7v7H5z" fill="#bdbdbd" />
          </Icon>
        </button>
        <button aria-label="File Explorer" className="ml-4">
          <Icon size={14}>
            <path d="M0 1h6l2 2h8v12H0z" fill="#e4a91e" />
            <path d="M0 5h16v6H0z" fill="#ffd75e" />
            <path d="M0 10h16v5H0z" fill="#1976c5" />
          </Icon>
        </button>
        <div className="flex h-[27px] w-[245px] items-center self-end bg-white">
          <span className="ml-[7px] h-2 w-[3px] border-x border-[#aaa]" />
          <span className="ml-[7px] whitespace-nowrap">vimeo.com is sharing your screen.</span>
          <button className="ml-auto h-6 w-[70px] shrink-0 whitespace-nowrap rounded-full bg-[#2858cf] text-[9px] font-semibold text-white">
            Stop sharing
          </button>
          <a href="#hide" className="mx-[7px] text-[#3f5f9f] underline">
            Hide
          </a>
        </div>
        <button aria-label="BobCAD" className="flex h-[26px] w-6 flex-col items-center justify-end gap-px rounded-sm bg-[#ebebeb]">
          <BobLogo size={18} />
          <span className="h-[2px] w-[9px] rounded-full bg-[#1873bd]" />
        </button>
        <button aria-label="Outlook" className="ml-[10px] flex flex-col items-center gap-px">
          <Icon size={17}>
            <path d="M3 4l6-4 7 4v9H3z" fill="#1779cc" />
            <path d="M6 5l5-3 5 3-5 4z" fill="#51c0f2" />
            <path d="M0 4h8v8H0z" fill="#0f5da9" />
            <circle cx="4" cy="8" r="2" stroke="#fff" strokeWidth="1.3" />
            <path d="M5 11h11v4H5z" fill="#2ab9ce" />
            <path d="M6 13h9" stroke="#0c596f" strokeDasharray="2 1" />
          </Icon>
          <span className="h-[2px] w-1 rounded-full bg-[#777]" />
        </button>
      </div>

      <div className="flex flex-1 items-center justify-end pr-3">
        <button aria-label="Show hidden icons">
          <ChevronUp size={10} />
        </button>
        <Mic size={12} color="#3a6ca8" className="ml-[11px]" />
        <Wifi size={12} className="ml-[9px]" />
        <Volume2 size={11} className="ml-1" />
        <Battery size={13} fill="#222" className="ml-1" />
        <time className="ml-[10px] text-right leading-[11px]">
          10:14 AM
          <br />
          6/4/2024
        </time>
        <Bell size={11} className="ml-1" />
        <button aria-label="Copilot" className="ml-3">
          <Icon size={16}>
            <path d="M4 1h6l2 5-4 8H3C0 14 0 10 1 8z" fill="#2f8edb" />
            <path d="M9 1h2c3 0 4 2 5 6s-2 7-5 7H8z" fill="#b65bd2" />
            <path d="M1 8l4-3 3 9H3z" fill="#58c29b" />
            <path d="M4 10h12v6H4z" fill="#f3b52c" />
            <path d="M6 13h8" stroke="#6b3a10" strokeWidth="2" strokeDasharray="2 1" />
          </Icon>
        </button>
      </div>
    </div>
  );
}

function RecorderWindow() {
  return (
    <section
      aria-label="Screen recorder"
      className="absolute bottom-[107px] right-4 flex h-[97px] w-[171px] flex-col rounded bg-[#1e2322] shadow-[0_3px_14px_rgba(0,0,0,0.3)]"
    >
      <div className="flex h-[21px] items-center gap-[6px] px-2 text-[#a9adac]">
        <Settings2 size={10} />
        <span>vimeo.com</span>
        <Mic size={9} className="ml-auto" />
      </div>
      <div className="mt-[22px] flex justify-center gap-2 text-white">
        <div className="flex h-[27px] w-20 items-center justify-around rounded-md bg-[#4b4b4b]">
          <button aria-label="Restart">
            <RotateCcw size={13} />
          </button>
          <button aria-label="Delete recording">
            <Trash2 size={13} />
          </button>
          <button aria-label="Pause">
            <Pause size={12} fill="white" strokeWidth={1} />
          </button>
        </div>
        <button className="flex h-[27px] w-[63px] items-center justify-center gap-[6px] rounded-md bg-[#f24c45] font-['Inter',sans-serif] text-[9px] font-bold">
          <span className="size-[10px] rounded-[1px] bg-white" />
          03:28
        </button>
      </div>
    </section>
  );
}

function App() {
  return (
    <div className="relative flex h-screen flex-col overflow-hidden font-['Roboto','Open_Sans',sans-serif] text-[8px] leading-[12px] text-[#1a1a1a]">
      <TitleBar />
      <RibbonTabs />
      <Ribbon />
      <div className="flex min-h-0 flex-1 gap-[5px] bg-linear-to-b from-[#bbdcfe] to-[#c3dcfa] px-1 pb-[5px] pt-[3px]">
        <DataEntryPanel />
        <Viewport />
        <RightPanels />
      </div>
      <StatusBar />
      <Taskbar />
      <RecorderWindow />
    </div>
  );
}

export default App;
